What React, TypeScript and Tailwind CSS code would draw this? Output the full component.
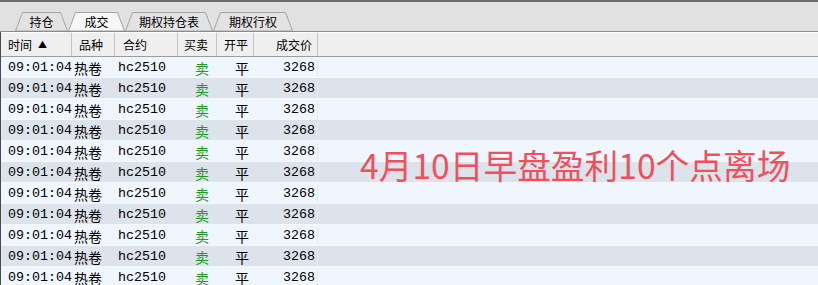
const tabs = [
  { label: '持仓', width: 53 },
  { label: '成交', width: 57, active: true },
  { label: '期权持仓表', width: 88 },
  { label: '期权行权', width: 80 },
];

const rows = Array.from({ length: 11 }, () => ({
  time: '09:01:04',
  product: '热卷',
  contract: 'hc2510',
  side: '卖',
  offset: '平',
  price: '3268',
}));

const cjk = "font-['Noto_Sans_CJK_SC',sans-serif]";
const mono = "font-['Liberation_Mono','Noto_Sans_CJK_SC',monospace]";

function Tab({ label, width, active }: { label: string; width: number; active?: boolean }) {
  return (
    <div className="relative flex h-[19px] items-center justify-center" style={{ width }}>
      <svg className="absolute inset-0" width={width} height={19} viewBox={`0 0 ${width} 19`}>
        <polygon
          points={`0.5,19 7.5,0.5 ${width - 7.5},0.5 ${width - 0.5},19`}
          fill={active ? '#f7f7f7' : '#e3e3e3'}
          stroke="#a4a4a4"
          strokeWidth="1"
        />
      </svg>
      <span className={`relative text-[12px] leading-none text-black ${cjk}`}>{label}</span>
    </div>
  );
}

function HeaderCell({ children, className }: { children: React.ReactNode; className: string }) {
  return (
    <div className={`flex h-full items-center border-r border-[#c4c4c4] text-[12px] text-black ${cjk} ${className}`}>
      {children}
    </div>
  );
}

export default function App() {
  return (
    <div className="relative h-[285px] w-[818px] overflow-hidden bg-[#f0f6fe]">
      <div className="h-[2px] bg-[#6b6b6b]" />

      <div className="flex h-[30px] items-end border-b border-[#8c8c8c] bg-[#e1e1e1] pl-[15px]">
        {tabs.map((tab) => (
          <Tab key={tab.label} {...tab} />
        ))}
      </div>

      <div className="border-l border-[#4a4a4a]">
        <div className="flex h-[25px] border-t border-white border-b border-b-[#9c9c9c] bg-[#efefef]">
          <HeaderCell className="w-[71px] pl-[7px]">
            时间
            <span className="ml-[6px] text-[9px]">▲</span>
          </HeaderCell>
          <HeaderCell className="w-[43px] pl-[7px]">品种</HeaderCell>
          <HeaderCell className="w-[63px] pl-[8px]">合约</HeaderCell>
          <HeaderCell className="w-[39px] pl-[6px]">买卖</HeaderCell>
          <HeaderCell className="w-[37px] pl-[7px]">开平</HeaderCell>
          <HeaderCell className="w-[64px] justify-end pr-[5px]">成交价</HeaderCell>
        </div>

        {rows.map((row, index) => (
          <div
            key={index}
            className={`flex h-[21px] items-center border-b border-[#f4f8fd] pt-[2px] text-black ${
              index % 2 === 0 ? 'bg-[#f0f6fe]' : 'bg-[#dde3ea]'
            }`}
          >
            <div className={`w-[71px] pl-[7px] text-[13.33px] ${mono}`}>{row.time}</div>
            <div className={`w-[43px] pl-[2px] text-[14px] ${cjk}`}>{row.product}</div>
            <div className={`w-[63px] pl-[3px] text-[13.33px] ${mono}`}>{row.contract}</div>
            <div className={`w-[39px] pl-[17px] text-[14px] text-[#1f9a1f] ${cjk}`}>{row.side}</div>
            <div className={`w-[37px] pl-[18px] text-[14px] ${cjk}`}>{row.offset}</div>
            <div className={`flex h-full w-[64px] items-center justify-end border-r border-[#e4e9f0] pr-[2px] text-[13.33px] ${mono}`}>
              {row.price}
            </div>
          </div>
        ))}
      </div>

      <div className={`absolute left-[360px] top-[148px] text-[33.7px] leading-none text-[#f0505c] ${cjk}`}>
        4月10日早盘盈利10个点离场
      </div>
    </div>
  );
}
